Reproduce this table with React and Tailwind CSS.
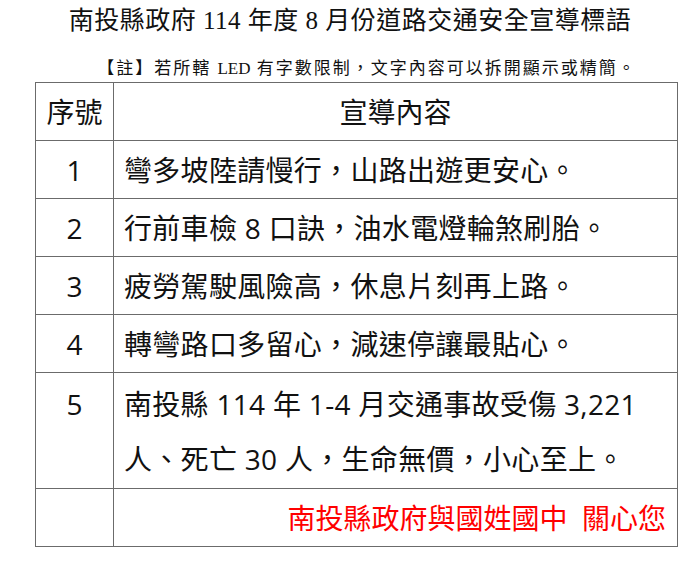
import React from "react";

const sans = { fontFamily: '"Open Sans", "Noto Sans CJK TC", "Noto Sans CJK SC", sans-serif' };

const rows = [
  { n: "1", t: "彎多坡陸請慢行，山路出遊更安心。" },
  { n: "2", t: "行前車檢 8 口訣，油水電燈輪煞刷胎。" },
  { n: "3", t: "疲勞駕駛風險高，休息片刻再上路。" },
  { n: "4", t: "轉彎路口多留心，減速停讓最貼心。" },
];

export default function App() {
  return (
    <div className="w-[700px] h-[562px] bg-white text-[#111] overflow-hidden">
      <div
        className="h-[40px] flex items-center justify-center text-[25px] leading-none tracking-[0.5px]"
        style={{ fontFamily: '"Liberation Serif", "Noto Sans CJK TC", serif' }}
      >
        <span>南投縣政府 114 年度 8 月份道路交通安全宣導標語</span>
      </div>
      <div
        className="mt-[14px] h-[28px] flex items-center justify-center pl-[34px] text-[17px] leading-none"
        style={{ fontFamily: '"Liberation Serif", "Noto Sans CJK TC", serif' }}
      >
        <span className="tracking-[2px] whitespace-pre">
          【註】若所轄 <span className="tracking-normal">LED</span> 有字數限制，文字內容可以拆開顯示或精簡。
        </span>
      </div>
      <div className="ml-[35px] w-[643px] border border-[#6b6b6b] text-[28px]" style={sans}>
        <div className="flex h-[58px] border-b border-[#6b6b6b]">
          <div className="w-[78px] border-r border-[#6b6b6b] flex items-center justify-center">序號</div>
          <div className="flex-1 flex items-center justify-center">宣導內容</div>
        </div>
        {rows.map((r) => (
          <div key={r.n} className="flex h-[58px] border-b border-[#6b6b6b]">
            <div className="w-[78px] border-r border-[#6b6b6b] flex items-center justify-center">{r.n}</div>
            <div className="flex-1 flex items-center pl-[10px] whitespace-pre tracking-[0.3px]">
              <span>{r.t}</span>
            </div>
          </div>
        ))}
        <div className="flex h-[116px] border-b border-[#6b6b6b]">
          <div className="w-[78px] border-r border-[#6b6b6b] flex justify-center pt-[4px] leading-[55px]">5</div>
          <div className="flex-1 pl-[10px] pt-[4px] leading-[55px] tracking-[0.3px]">
            <div className="whitespace-nowrap">南投縣 114 年 1-4 月交通事故受傷 3,221</div>
            <div className="whitespace-nowrap">人、死亡 30 人，生命無價，小心至上。</div>
          </div>
        </div>
        <div className="flex h-[57px]">
          <div className="w-[78px] border-r border-[#6b6b6b]"></div>
          <div className="flex-1 flex items-center justify-end pr-[11px] text-[#ff0000] whitespace-pre">
            <span>南投縣政府與國姓國中  關心您</span>
          </div>
        </div>
      </div>
    </div>
  );
}
